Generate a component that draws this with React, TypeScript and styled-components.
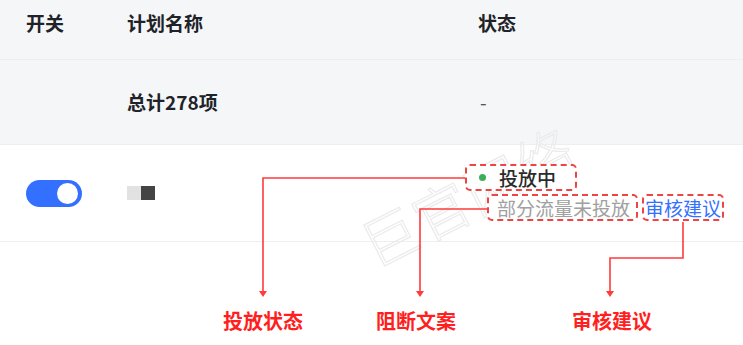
import React from 'react'
import styled, { createGlobalStyle } from 'styled-components'

const GlobalStyle = createGlobalStyle`
    html, body {
        margin: 0;
        padding: 0;
        background: #ffffff;
    }
    body {
        font-family: "Noto Sans CJK SC", "Noto Sans", sans-serif;
        color: #1f2329;
    }
`

const Page = styled.div`
    position: relative;
    width: 743px;
    height: 345px;
    overflow: hidden;
`

const Row = styled.div<{ $height: number; $bg?: string; $align?: string; $top?: number }>`
    display: grid;
    grid-template-columns: 127px 351px 1fr;
    height: ${p => p.$height}px;
    box-sizing: border-box;
    background: ${p => p.$bg || '#ffffff'};
    border-bottom: 1px solid #eceef1;
    align-items: ${p => p.$align || 'center'};
    padding-top: ${p => p.$top || 0}px;
`

const Cell = styled.div<{ $pad?: number }>`
    padding-left: ${p => p.$pad || 0}px;
    font-size: 19px;
    line-height: 22px;
    font-weight: 600;
    color: #1f2329;
`

const Dash = styled.span`
    font-size: 19px;
    font-weight: 400;
    color: #555;
`

const Toggle = styled.div<{ $on: boolean }>`
    position: relative;
    width: 56px;
    height: 27px;
    border-radius: 14px;
    background: ${p => (p.$on ? '#3370ff' : '#c9cdd4')};
    &::after {
        content: '';
        position: absolute;
        top: 3px;
        left: ${p => (p.$on ? '31px' : '3px')};
        width: 21px;
        height: 21px;
        border-radius: 50%;
        background: #ffffff;
    }
`

const Masked = styled.div`
    display: flex;
    height: 14px;
`

const MaskBlock = styled.span<{ $tone: string; $w: number }>`
    width: ${p => p.$w}px;
    height: 100%;
    background: ${p => p.$tone};
`

const StatusCell = styled.div`
    display: flex;
    flex-direction: column;
    align-items: flex-start;
    gap: 3px;
    margin-top: -1px;
`

const Outline = styled.div<{ $pad: string; $ml?: number }>`
    position: relative;
    z-index: 2;
    display: flex;
    align-items: center;
    height: 27px;
    box-sizing: border-box;
    padding: ${p => p.$pad};
    margin-left: ${p => p.$ml || 0}px;
    border: 2px dashed #ee4444;
    border-radius: 5px;
    background: #ffffff;
`

const Dot = styled.span`
    flex-shrink: 0;
    width: 7px;
    height: 7px;
    border-radius: 50%;
    background: #3fae5a;
    margin-right: 13px;
`

const StatusText = styled.span<{ $color: string; $weight?: number }>`
    font-size: 19px;
    line-height: 22px;
    font-weight: ${p => p.$weight || 400};
    color: ${p => p.$color};
    white-space: nowrap;
`

const SubLine = styled.div`
    display: flex;
    gap: 4px;
    margin-left: 9px;
`

const Watermark = styled.div`
    position: absolute;
    z-index: 1;
    left: 467px;
    top: 195px;
    transform: translate(-50%, -50%) rotate(-27deg);
    font-size: 56px;
    line-height: 1;
    font-weight: 300;
    letter-spacing: 2px;
    color: transparent;
    -webkit-text-stroke: 1.2px #ebebed;
    white-space: nowrap;
    pointer-events: none;
`

const Callouts = styled.svg`
    position: absolute;
    z-index: 3;
    left: 0;
    top: 0;
    pointer-events: none;
`

const CalloutLabel = styled.span<{ $x: number }>`
    position: absolute;
    z-index: 3;
    left: ${p => p.$x}px;
    top: 309px;
    font-size: 20px;
    line-height: 24px;
    font-weight: 700;
    color: #ff1f1f;
    white-space: nowrap;
`

const RED = '#ff3b3b'

const Arrow = ({ d, x, y }: { d: string; x: number; y: number }) => (
    <g>
        <path d={d} fill="none" stroke={RED} strokeWidth={1.6} />
        <path d={`M${x - 4} ${y - 6} L${x + 4} ${y - 6} L${x} ${y} Z`} fill={RED} />
    </g>
)

export default function App() {
    return (
        <Page>
            <GlobalStyle />
            <Row $height={60} $bg="#f5f6f8" $align="start" $top={12}>
                <Cell $pad={26}>开关</Cell>
                <Cell>计划名称</Cell>
                <Cell>状态</Cell>
            </Row>
            <Row $height={85} $bg="#f5f6f8">
                <Cell />
                <Cell>总计278项</Cell>
                <Cell $pad={2}><Dash>-</Dash></Cell>
            </Row>
            <Row $height={97}>
                <Cell $pad={26}>
                    <Toggle $on />
                </Cell>
                <Cell>
                    <Masked>
                        <MaskBlock $tone="#e2e2e2" $w={14} />
                        <MaskBlock $tone="#444444" $w={14} />
                    </Masked>
                </Cell>
                <StatusCell>
                    <Outline $pad="0 19px 0 12px" $ml={-13}>
                        <Dot />
                        <StatusText $color="#2b2b2b" $weight={500}>投放中</StatusText>
                    </Outline>
                    <SubLine>
                        <Outline $pad="0 6px 0 8px">
                            <StatusText $color="#a0a0a0">部分流量未投放</StatusText>
                        </Outline>
                        <Outline $pad="0 1px 0 1px">
                            <StatusText $color="#3370ff">审核建议</StatusText>
                        </Outline>
                    </SubLine>
                </StatusCell>
            </Row>

            <Watermark>巨官网络</Watermark>

            <Callouts width={743} height={345}>
                <Arrow d="M465 178 H263 V294" x={263} y={297} />
                <Arrow d="M487 209 H420 V294" x={420} y={297} />
                <Arrow d="M683 222 V258 H610 V294" x={610} y={297} />
            </Callouts>
            <CalloutLabel $x={223}>投放状态</CalloutLabel>
            <CalloutLabel $x={376}>阻断文案</CalloutLabel>
            <CalloutLabel $x={572}>审核建议</CalloutLabel>
        </Page>
    )
}
